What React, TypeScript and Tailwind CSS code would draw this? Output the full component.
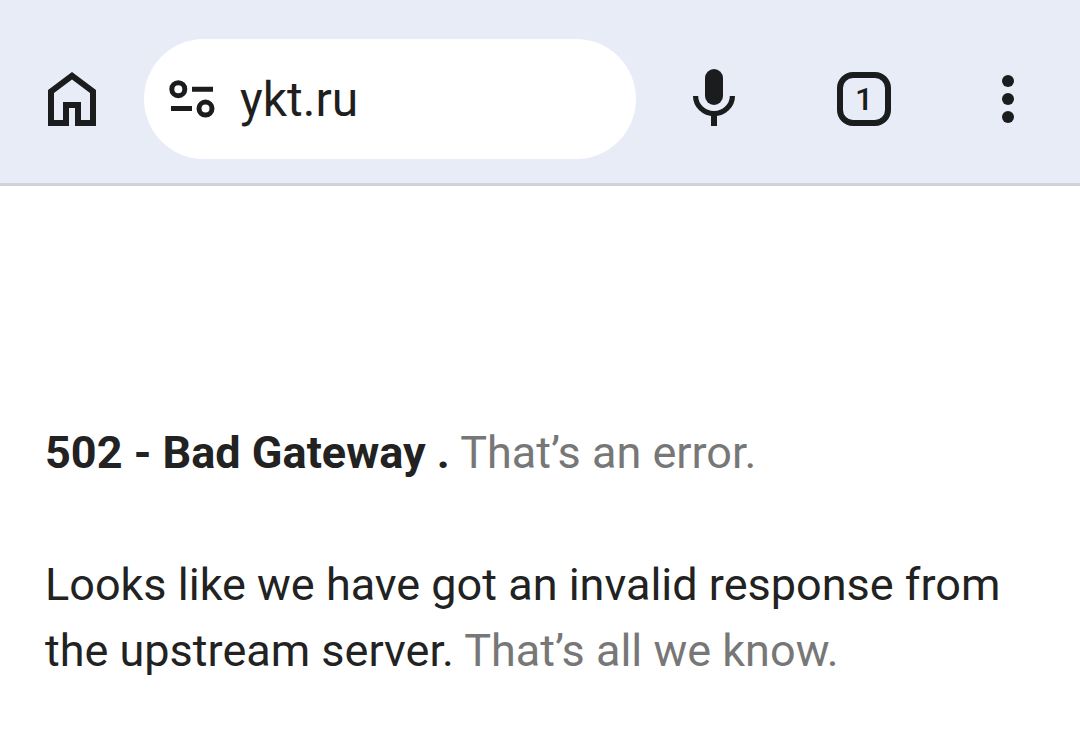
const HomeIcon = () => (
  <svg width="48" height="54" viewBox="0 0 48 54" fill="currentColor" aria-hidden="true">
    <path
      fillRule="evenodd"
      d="M0 18 24 0l24 18v36H27V36h-6v18H0V18Zm6 3v27h9V30h18v18h9V21L24 7.5 6 21Z"
    />
  </svg>
);

const TuneIcon = () => (
  <svg width="48" height="38" viewBox="0 0 48 38" fill="none" stroke="currentColor" strokeWidth="5" aria-hidden="true">
    <circle cx="10.3" cy="9.2" r="6.5" />
    <path d="M24 9.2h21M3 28.6h21" />
    <circle cx="37.5" cy="28.6" r="6.5" />
  </svg>
);

const MicIcon = () => (
  <svg width="42" height="60" viewBox="0 0 42 60" aria-hidden="true">
    <rect x="12" width="18" height="36" rx="9" fill="currentColor" />
    <path d="M2.6 27a18.4 17.6 0 0 0 36.8 0" fill="none" stroke="currentColor" strokeWidth="5.2" />
    <path d="M21 45v12" stroke="currentColor" strokeWidth="6" />
  </svg>
);

const MoreIcon = () => (
  <svg width="12" height="48" viewBox="0 0 12 48" fill="currentColor" aria-hidden="true">
    <circle cx="6" cy="6" r="6" />
    <circle cx="6" cy="24" r="6" />
    <circle cx="6" cy="42" r="6" />
  </svg>
);

const Toolbar = () => (
  <header className="flex items-center border-b-3 border-[#d0d4da] bg-[#e8ecf7] pt-[39px] pb-6 text-[#1a1c1e]">
    <button type="button" aria-label="Home" className="flex h-30 w-36 items-center justify-center">
      <HomeIcon />
    </button>

    <div className="flex h-30 min-w-0 flex-1 items-center gap-6 rounded-full bg-white px-6">
      <button type="button" aria-label="Site information" className="shrink-0">
        <TuneIcon />
      </button>
      <input
        type="text"
        aria-label="Address"
        className="w-full min-w-0 pt-0.5 text-[48px] leading-[60px] text-[#1f1f1f] outline-none"
        defaultValue="ykt.ru"
      />
    </div>

    <button type="button" aria-label="Voice search" className="flex h-30 w-39 items-center justify-center">
      <MicIcon />
    </button>
    <button type="button" aria-label="Open tabs" className="flex h-30 w-36 items-center justify-center">
      <span className="flex size-[54px] items-center justify-center rounded-2xl border-6 border-current text-[32px] leading-[42px] font-medium">
        1
      </span>
    </button>
    <button type="button" aria-label="More options" className="flex h-30 w-36 items-center justify-center">
      <MoreIcon />
    </button>
  </header>
);

const App = () => {
  return (
    <div className="min-h-screen bg-white font-['Roboto',sans-serif]">
      <Toolbar />
      <main className="space-y-[66px] px-[45px] pt-[234px] text-[45px] leading-[66px] text-[#222]">
        <p>
          <b>502 - Bad Gateway .</b> <span className="text-[#777]">That’s an error.</span>
        </p>
        <p>
          Looks like we have got an invalid response from the upstream server.{" "}
          <span className="text-[#777]">That’s all we know.</span>
        </p>
      </main>
    </div>
  );
};

export default App;
